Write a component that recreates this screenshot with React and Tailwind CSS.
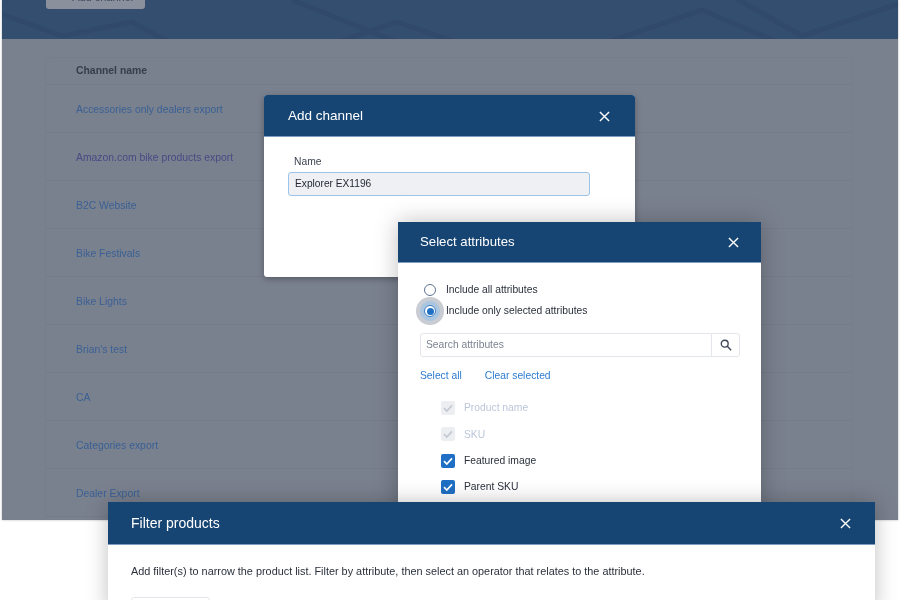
import React from "react";

const rows = [
  ["Accessories only dealers export", "text-[#3a6095]"],
  ["Amazon.com bike products export", "text-[#474a84]"],
  ["B2C Website", "text-[#3a6095]"],
  ["Bike Festivals", "text-[#3a6095]"],
  ["Bike Lights", "text-[#3a6095]"],
  ["Brian's test", "text-[#3a6095]"],
  ["CA", "text-[#3a6095]"],
  ["Categories export", "text-[#3a6095]"],
  ["Dealer Export", "text-[#3a6095]"],
];

function Close() {
  return (
    <svg viewBox="0 0 12 12" className="w-[11px] h-[11px]" fill="none" stroke="white" strokeWidth="1.5">
      <path d="M1 1 L11 11 M11 1 L1 11" />
    </svg>
  );
}

function Head({ title, className, textClass }) {
  return (
    <div className={`flex items-center justify-between bg-[#164473] border-b border-[#7d9cbf] text-white ${className}`}>
      <span className={textClass}>{title}</span>
      <Close />
    </div>
  );
}

function Check({ disabled }) {
  return (
    <span className={`flex items-center justify-center w-[14px] h-[14px] rounded-[2px] ${disabled ? "bg-[#eceef2]" : "bg-[#1f6fc4]"}`}>
      <svg viewBox="0 0 14 14" className="w-[14px] h-[14px]" fill="none" stroke={disabled ? "#c3c8d1" : "white"} strokeWidth="1.7">
        <path d="M3 7.2 L5.8 10 L11 4.4" />
      </svg>
    </span>
  );
}

function Attr({ label, disabled }) {
  return (
    <div className="flex items-center h-[14px] gap-[9px]">
      <Check disabled={disabled} />
      <span className={`text-[10.3px] ${disabled ? "text-[#bcc6d8]" : "text-[#2a303b]"}`}>{label}</span>
    </div>
  );
}

export default function App() {
  return (
    <div className="relative w-[900px] h-[600px] overflow-hidden bg-white font-['Liberation_Sans',Arial,sans-serif] blur-[0.35px]">
      <div className="ml-[2px] w-[896px] h-[520px] bg-[#7a818e] overflow-hidden flex flex-col shadow-[0_0_2px_rgba(0,0,0,0.3)]">
        <div className="relative h-[39px] shrink-0 bg-[#344e70] overflow-hidden">
          <svg className="absolute inset-0 w-full h-full" viewBox="0 0 896 39" fill="none" stroke="#314a6b" strokeWidth="5" aria-hidden="true">
            <path d="M0 14 L60 36 L130 22 L170 44 M290 0 L400 44 M330 44 L395 22 L460 44 M600 44 L700 10 L780 44 M730 -4 L800 36 L896 4" />
          </svg>
          <div className="absolute left-[44px] -top-[14px] w-[99px] h-[23px] rounded-[3px] bg-[#8a919d] flex items-center justify-center gap-[8px] text-[11px] text-[#3e4a5c]">
            <span>+</span>
            <span>Add channel</span>
          </div>
        </div>
        <div className="mx-[43px] mt-[18px] w-[808px] rounded-t-[6px] border border-b-0 border-[#767e8b]">
          <div className="h-[27px] pl-[30px] flex items-center text-[10.4px] font-bold text-[#363d4b] border-b border-[#747c8a]">
            Channel name
          </div>
          {rows.map(([name, cls]) => (
            <div key={name} className="h-[48px] pl-[30px] pt-[18px] border-b border-[#747c8a]">
              <div className={`text-[10.4px] leading-[13px] ${cls}`}>{name}</div>
            </div>
          ))}
        </div>
      </div>

      <div className="absolute left-[264px] top-[95px] w-[371px] h-[182px] bg-white rounded-[3px] overflow-hidden shadow-[0_2px_6px_rgba(0,0,0,0.3)]">
        <Head title="Add channel" className="h-[42px] pl-[24px] pr-[25px] pt-[1px]" textClass="text-[13.5px]" />
        <div className="pl-[24px] pt-[18px]">
          <div className="pl-[6px] text-[10.3px] leading-[13px] text-[#3d4350]">Name</div>
          <div className="mt-[4px] w-[302px] h-[24px] pl-[6px] flex items-center rounded-[3px] bg-[#eef0f4] border border-[#9cc3ea] text-[10.2px] text-[#1f2430]">
            Explorer EX1196
          </div>
        </div>
      </div>

      <div className="absolute left-[398px] top-[222px] w-[363px] h-[290px] bg-white overflow-hidden shadow-[0_0_22px_rgba(0,0,0,0.25)]">
        <Head title="Select attributes" className="h-[41px] pl-[22px] pr-[22px]" textClass="text-[13.2px]" />
        <div className="pl-[22px] pt-[20px]">
          <div className="flex items-center h-[14px] text-[10.3px] text-[#2a303b]">
            <span className="w-[12px] h-[12px] ml-[4px] rounded-full border-[1.5px] border-[#5d7391] bg-white" />
            <span className="ml-[10px]">Include all attributes</span>
          </div>
          <div className="flex items-center h-[14px] mt-[7px] text-[10.3px] text-[#2a303b]">
            <span className="relative w-[12px] h-[12px] ml-[4px] rounded-full border-[1.5px] border-[#3f7fc6] bg-white flex items-center justify-center shadow-[0_0_0_4px_#aac5e0,0_0_0_8px_#c9ccd3]">
              <span className="w-[7px] h-[7px] rounded-full bg-[#1f6fc4]" />
            </span>
            <span className="ml-[10px]">Include only selected attributes</span>
          </div>
          <div className="mt-[15px] w-[320px] h-[24px] flex rounded-[3px] border border-[#e3e6eb]">
            <div className="flex-1 pl-[5px] flex items-center text-[10.3px] text-[#7c8290]">Search attributes</div>
            <div className="w-[28px] border-l border-[#e3e6eb] flex items-center justify-center">
              <svg viewBox="0 0 14 14" className="w-[12px] h-[12px]" fill="none" stroke="#3d4654" strokeWidth="1.6">
                <circle cx="5.5" cy="5.5" r="4" />
                <path d="M8.5 8.5 L13 13" />
              </svg>
            </div>
          </div>
          <div className="mt-[12px] flex gap-[23px] text-[10.3px] leading-[13px] text-[#2e7ccf]">
            <span>Select all</span>
            <span>Clear selected</span>
          </div>
          <div className="mt-[19px] pl-[21px] flex flex-col gap-[12.4px]">
            <Attr label="Product name" disabled />
            <Attr label="SKU" disabled />
            <Attr label="Featured image" />
            <Attr label="Parent SKU" />
          </div>
        </div>
      </div>

      <div className="absolute left-[108px] top-[502px] w-[767px] h-[110px] bg-white shadow-[0_0_20px_rgba(0,0,0,0.25)]">
        <Head title="Filter products" className="h-[43px] pl-[23px] pr-[24px]" textClass="text-[14px]" />
        <div className="pl-[23px] pt-[20px] text-[10.87px] leading-[13px] text-[#2a303b]">
          Add filter(s) to narrow the product list. Filter by attribute, then select an operator that relates to the attribute.
        </div>
        <div className="ml-[23px] mt-[19px] w-[79px] h-[20px] rounded-[3px] border border-[#e3e6eb]" />
      </div>
    </div>
  );
}
